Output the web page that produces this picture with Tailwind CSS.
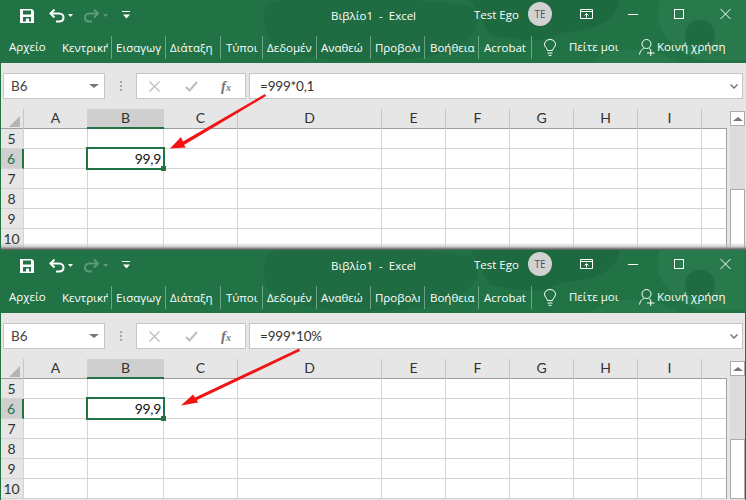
<!DOCTYPE html>
<html><head><meta charset="utf-8"><script src="https://cdn.jsdelivr.net/npm/@tailwindcss/browser@4"></script></head>
<body class="m-0 overflow-hidden bg-[#217346] font-['Open_Sans',sans-serif]">
<div class="relative w-[746px] h-[500px] overflow-hidden">

<!-- PANEL 1 -->
<section class="relative h-[250px] bg-[#e6e6e6] border-l border-[#217346] overflow-hidden">
  <header class="relative h-[63px] -ml-px bg-[#217346] text-white overflow-hidden">
    <svg class="absolute left-0 top-0" width="746" height="63" fill="none"><path d="M268 3C300 -6 400 -4 470 6C490 22 470 48 430 56C370 66 290 62 270 40C262 28 262 12 268 3Z" fill="#1f6c42"/><path d="M470 0H620C615 25 590 30 560 33C540 45 520 40 490 35Z" fill="#1e6a40"/><path d="M660 0H746V60H700C670 50 650 25 660 0Z" fill="#287a4d"/><circle cx="700" cy="35" r="15" fill="#1f6c42"/><path d="M590 63C610 45 650 45 680 63Z" fill="#27784b"/></svg>
    <div class="relative flex items-center h-[31px]">
      <svg class="ml-[20px] w-[14px] h-[14px]" viewBox="0 0 14 14"><path fill="#fff" fill-rule="evenodd" d="M0 0H12L14 2V14H0ZM3 1.500V5.500H11V1.500ZM3 8V12.500H11V8ZM6 9.500H9V12.500H6Z"/></svg>
      <svg class="ml-[15px] w-[16px] h-[14px]" viewBox="0 0 16 14" fill="none" stroke="#fff" stroke-width="2"><path d="M1.500 4.500H10C13 4.500 14.500 6.500 14.500 8.500C14.500 11 12.500 12.500 10 12.500H7"/><path d="M5.500 .5L1.500 4.500L5.500 8.500"/></svg>
      <svg class="ml-[3px] w-[5px] h-[3px]" viewBox="0 0 5 3"><path d="M0 0H5L2.500 3Z" fill="#fff"/></svg>
      <svg class="ml-[11px] w-[15px] h-[14px]" viewBox="0 0 15 14" fill="none" stroke="#5d9a78" stroke-width="2"><path d="M14 4.500H5.500C2.500 4.500 1 6.500 1 8.500C1 11 3 12.500 5.500 12.500H8"/><path d="M10 .5L14 4.500L10 8.500"/></svg>
      <svg class="ml-[4px] w-[5px] h-[3px]" viewBox="0 0 5 3"><path d="M0 0H5L2.500 3Z" fill="#5d9a78"/></svg>
      <svg class="ml-[14px] w-[9px] h-[9px]" viewBox="0 0 9 9" fill="none" stroke="#fff"><path d="M0 .5H8"/><path d="M1 3.500H8L4.500 7.500Z" fill="#fff" stroke="none"/></svg>
      <span class="ml-[200px] w-[84px] text-[11.5px] leading-none whitespace-pre">Βιβλίο1  -  Excel</span>
      <span class="ml-[59px] w-[44px] self-start mt-[9px] text-[11.5px] leading-none whitespace-nowrap">Test Ego</span>
      <span class="ml-[10px] self-start mt-[2px] w-[24px] h-[24px] rounded-full bg-[#d2d2d2] text-[#44546a] text-[10px] flex items-center justify-center">TE</span>
      <svg class="ml-[28px] self-start mt-[9px] w-[13px] h-[10px]" viewBox="0 0 13 10" fill="none" stroke="#fff"><path d="M.5 .5H12.500V9.500H.5ZM.5 2.500H12.500"/><path d="M6.500 8.500V5M4.500 6.500L6.500 4.500L8.500 6.500"/></svg>
      <span class="ml-[35px] self-start mt-[14px] w-[10px] h-px bg-white"></span>
      <span class="ml-[36px] self-start mt-[9px] w-[10px] h-[10px] border border-white"></span>
      <svg class="ml-[36px] self-start mt-[9px] w-[11px] h-[10px]" viewBox="0 0 11 10" stroke="#fff" stroke-width="1"><path d="M.5 0L10.500 10M10.500 0L.5 10"/></svg>
    </div>
    <nav class="relative flex items-center h-[32px] text-[11.5px] whitespace-nowrap">
      <span class="w-[62px] pl-[9px]">Αρχείο</span>
      <span class="w-[50px] h-[23px] leading-[23px] pr-[3px] border-r border-white/35"><span class="block overflow-hidden">Κεντρική</span></span>
      <span class="w-[54px] h-[23px] leading-[23px] pl-[4px] border-r border-white/35">Εισαγωγ</span>
      <span class="w-[55px] h-[23px] leading-[23px] pl-[4px] border-r border-white/35">Διάταξη</span>
      <span class="w-[42px] h-[23px] leading-[23px] pl-[5px] border-r border-white/35">Τύποι</span>
      <span class="w-[54px] h-[23px] leading-[23px] pl-[4px] border-r border-white/35">Δεδομέν</span>
      <span class="w-[54px] h-[23px] leading-[23px] pl-[4px] border-r border-white/35">Αναθεώ</span>
      <span class="w-[54px] h-[23px] leading-[23px] pl-[4px] pr-[4px] border-r border-white/35"><span class="block overflow-hidden">Προβολή</span></span>
      <span class="w-[54px] h-[23px] leading-[23px] pl-[5px] border-r border-white/35">Βοήθεια</span>
      <span class="w-[53px] h-[23px] leading-[23px] pl-[5px] border-r border-white/35">Acrobat</span>
      <svg class="ml-[12px] w-[12px] h-[17px]" viewBox="0 0 12 17" fill="none" stroke="#fff"><path d="M3.500 11.500C3 9 .5 8 .5 5.200C.5 2.500 3 .5 6 .5C9 .5 11.500 2.500 11.500 5.200C11.500 8 9 9 8.500 11.500ZM3.500 14H8.500M4.500 16.300H7.500"/></svg>
      <span class="ml-[13px] w-[49px]">Πείτε μοι</span>
      <svg class="ml-[21px] w-[16px] h-[17px]" viewBox="0 0 16 17" fill="none" stroke="#fff"><circle cx="7.500" cy="5" r="4.500"/><path d="M.5 15.500C1 12 3 10 5 9.500M10 9.500L11.500 10.500M8 14H15.500M11.750 10.500V17"/></svg>
      <span class="ml-[2px]">Κοινή χρήση</span>
    </nav>
  </header>

  <div class="flex h-[46px] pt-[10px] items-start text-[#444]">
    <div class="ml-[2px] w-[102px] h-[26px] bg-white border border-[#c6c6c6] flex items-center justify-between pl-[7px] pr-[5px] font-['Lato',sans-serif] text-[13.5px]"><span>B6</span><i class="w-0 h-0 border-x-[5px] border-t-[4px] border-x-transparent border-t-[#777]"></i></div>
    <div class="w-[31px] h-[26px] flex flex-col items-center justify-center gap-[2px]"><b class="w-[2px] h-[2px] bg-[#a8a8a8]"></b><b class="w-[2px] h-[2px] bg-[#a8a8a8]"></b><b class="w-[2px] h-[2px] bg-[#a8a8a8]"></b></div>
    <div class="w-[110px] h-[26px] bg-white border border-[#c6c6c6] flex items-center">
      <svg class="ml-[12px] w-[11px] h-[11px]" viewBox="0 0 11 11" stroke="#bdbdbd" stroke-width="1.300"><path d="M.5 .5L10.500 10.500M10.500 .5L.5 10.500"/></svg>
      <svg class="ml-[25px] w-[13px] h-[11px]" viewBox="0 0 13 11" fill="none" stroke="#bdbdbd" stroke-width="2"><path d="M1 6L4.500 9.500L12 1"/></svg>
      <span class="ml-[23px] font-['Liberation_Serif',serif] italic font-bold text-[15px] leading-none text-[#777]">f<span class="text-[10px]">x</span></span>
    </div>
    <div class="ml-[3px] w-[494px] h-[26px] bg-white border border-[#c6c6c6] flex items-center justify-between pl-[10px] pr-[4px] font-['Lato',sans-serif] text-[13.5px] tracking-[-0.2px] text-[#333]"><span>=999*0,1</span><svg class="w-[8px] h-[5px]" viewBox="0 0 8 5" fill="none" stroke="#777" stroke-width="1.500"><path d="M.5 .5L4 4L7.500 .5"/></svg></div>
  </div>

  <div class="flex -ml-px">
    <div class="w-[727px] font-['Lato',sans-serif] text-[14px] text-[#222]">
      <div class="grid grid-cols-[24px_64px_76px_74px_144px_64px_64px_64px_64px_64px_25px] h-[20px] text-center leading-[18px] text-[#333] border-b border-[#9f9f9f]">
        <div class="border-r border-[#c6c6c6] relative"><i class="absolute right-[3px] bottom-[2px] w-0 h-0 border-l-[11px] border-b-[11px] border-l-transparent border-b-[#b4b4b4]"></i></div>
        <div class="border-r border-[#c6c6c6]">A</div>
        <div class="-ml-px bg-[#cfcfcf] border-b-2 border-[#217346] h-[20px]">B</div>
        <div class="border-r border-[#c6c6c6]">C</div>
        <div class="border-r border-[#c6c6c6]">D</div>
        <div class="border-r border-[#c6c6c6]">E</div>
        <div class="border-r border-[#c6c6c6]">F</div>
        <div class="border-r border-[#c6c6c6]">G</div>
        <div class="border-r border-[#c6c6c6]">H</div>
        <div class="border-r border-[#c6c6c6]">I</div>
        <div></div>
      </div>
      <div class="border-r border-[#9f9f9f] bg-white">
        <div class="grid grid-cols-[24px_64px_76px_74px_144px_64px_64px_64px_64px_64px_24px] h-[20px] leading-[19px] *:border-r *:border-b *:border-[#d4d4d4]"><div class="bg-[#e6e6e6] text-center text-[#333]">5</div><div></div><div></div><div></div><div></div><div></div><div></div><div></div><div></div><div></div><div class="border-r-0!"></div></div>
        <div class="grid grid-cols-[24px_64px_76px_74px_144px_64px_64px_64px_64px_64px_24px] h-[20px] leading-[19px] *:border-r *:border-b *:border-[#d4d4d4]"><div class="bg-[#cfcfcf] text-center text-[#217346] border-r-2! border-r-[#217346]!">6</div><div></div><div class="relative"><div class="absolute left-[-2px] top-[-2px] w-[79px] h-[23px] border-2 border-[#217346] text-right pr-[2px] leading-[20px] tracking-[-0.3px] text-[#111] z-10">99,9<i class="absolute right-[-3px] bottom-[-3px] w-[5px] h-[5px] bg-[#217346]"></i></div></div><div></div><div></div><div></div><div></div><div></div><div></div><div></div><div class="border-r-0!"></div></div>
        <div class="grid grid-cols-[24px_64px_76px_74px_144px_64px_64px_64px_64px_64px_24px] h-[20px] leading-[19px] *:border-r *:border-b *:border-[#d4d4d4]"><div class="bg-[#e6e6e6] text-center text-[#333]">7</div><div></div><div></div><div></div><div></div><div></div><div></div><div></div><div></div><div></div><div class="border-r-0!"></div></div>
        <div class="grid grid-cols-[24px_64px_76px_74px_144px_64px_64px_64px_64px_64px_24px] h-[20px] leading-[19px] *:border-r *:border-b *:border-[#d4d4d4]"><div class="bg-[#e6e6e6] text-center text-[#333]">8</div><div></div><div></div><div></div><div></div><div></div><div></div><div></div><div></div><div></div><div class="border-r-0!"></div></div>
        <div class="grid grid-cols-[24px_64px_76px_74px_144px_64px_64px_64px_64px_64px_24px] h-[20px] leading-[19px] *:border-r *:border-b *:border-[#d4d4d4]"><div class="bg-[#e6e6e6] text-center text-[#333]">9</div><div></div><div></div><div></div><div></div><div></div><div></div><div></div><div></div><div></div><div class="border-r-0!"></div></div>
        <div class="grid grid-cols-[24px_64px_76px_74px_144px_64px_64px_64px_64px_64px_24px] h-[20px] leading-[19px] *:border-r *:border-b *:border-[#d4d4d4]"><div class="bg-[#e6e6e6] text-center text-[#333]">10</div><div></div><div></div><div></div><div></div><div></div><div></div><div></div><div></div><div></div><div class="border-r-0!"></div></div>
      </div>
    </div>
    <div class="ml-[3px] w-[15px] bg-[#dcdcdc] h-[138px] mt-[2px] flex flex-col justify-between">
      <div class="h-[15px] bg-white border border-[#ababab] flex items-center justify-center"><i class="w-0 h-0 border-x-[5px] border-b-[4px] border-x-transparent border-b-[#777]"></i></div>
      <div class="h-[60px] bg-white border border-[#ababab]"></div>
    </div>
  </div>
  <div class="absolute left-0 right-0 bottom-0 h-[7px] bg-gradient-to-b from-transparent via-[#bdbdbd]/70 to-[#555]"></div>
</section>

<!-- PANEL 2 -->
<section class="relative h-[250px] bg-[#e6e6e6] border-x border-[#217346] overflow-hidden">
  <header class="relative h-[63px] -ml-px -mr-px bg-[#217346] text-white overflow-hidden">
    <svg class="absolute left-0 top-0" width="746" height="63" fill="none"><path d="M268 3C300 -6 400 -4 470 6C490 22 470 48 430 56C370 66 290 62 270 40C262 28 262 12 268 3Z" fill="#1f6c42"/><path d="M470 0H620C615 25 590 30 560 33C540 45 520 40 490 35Z" fill="#1e6a40"/><path d="M660 0H746V60H700C670 50 650 25 660 0Z" fill="#287a4d"/><circle cx="700" cy="35" r="15" fill="#1f6c42"/><path d="M590 63C610 45 650 45 680 63Z" fill="#27784b"/></svg>
    <div class="relative flex items-center h-[31px]">
      <svg class="ml-[20px] w-[14px] h-[14px]" viewBox="0 0 14 14"><path fill="#fff" fill-rule="evenodd" d="M0 0H12L14 2V14H0ZM3 1.500V5.500H11V1.500ZM3 8V12.500H11V8ZM6 9.500H9V12.500H6Z"/></svg>
      <svg class="ml-[15px] w-[16px] h-[14px]" viewBox="0 0 16 14" fill="none" stroke="#fff" stroke-width="2"><path d="M1.500 4.500H10C13 4.500 14.500 6.500 14.500 8.500C14.500 11 12.500 12.500 10 12.500H7"/><path d="M5.500 .5L1.500 4.500L5.500 8.500"/></svg>
      <svg class="ml-[3px] w-[5px] h-[3px]" viewBox="0 0 5 3"><path d="M0 0H5L2.500 3Z" fill="#fff"/></svg>
      <svg class="ml-[11px] w-[15px] h-[14px]" viewBox="0 0 15 14" fill="none" stroke="#5d9a78" stroke-width="2"><path d="M14 4.500H5.500C2.500 4.500 1 6.500 1 8.500C1 11 3 12.500 5.500 12.500H8"/><path d="M10 .5L14 4.500L10 8.500"/></svg>
      <svg class="ml-[4px] w-[5px] h-[3px]" viewBox="0 0 5 3"><path d="M0 0H5L2.500 3Z" fill="#5d9a78"/></svg>
      <svg class="ml-[14px] w-[9px] h-[9px]" viewBox="0 0 9 9" fill="none" stroke="#fff"><path d="M0 .5H8"/><path d="M1 3.500H8L4.500 7.500Z" fill="#fff" stroke="none"/></svg>
      <span class="ml-[200px] w-[84px] text-[11.5px] leading-none whitespace-pre">Βιβλίο1  -  Excel</span>
      <span class="ml-[59px] w-[44px] self-start mt-[9px] text-[11.5px] leading-none whitespace-nowrap">Test Ego</span>
      <span class="ml-[10px] self-start mt-[2px] w-[24px] h-[24px] rounded-full bg-[#d2d2d2] text-[#44546a] text-[10px] flex items-center justify-center">TE</span>
      <svg class="ml-[28px] self-start mt-[9px] w-[13px] h-[10px]" viewBox="0 0 13 10" fill="none" stroke="#fff"><path d="M.5 .5H12.500V9.500H.5ZM.5 2.500H12.500"/><path d="M6.500 8.500V5M4.500 6.500L6.500 4.500L8.500 6.500"/></svg>
      <span class="ml-[35px] self-start mt-[14px] w-[10px] h-px bg-white"></span>
      <span class="ml-[36px] self-start mt-[9px] w-[10px] h-[10px] border border-white"></span>
      <svg class="ml-[36px] self-start mt-[9px] w-[11px] h-[10px]" viewBox="0 0 11 10" stroke="#fff" stroke-width="1"><path d="M.5 0L10.500 10M10.500 0L.5 10"/></svg>
    </div>
    <nav class="relative flex items-center h-[32px] text-[11.5px] whitespace-nowrap">
      <span class="w-[62px] pl-[9px]">Αρχείο</span>
      <span class="w-[50px] h-[23px] leading-[23px] pr-[3px] border-r border-white/35"><span class="block overflow-hidden">Κεντρική</span></span>
      <span class="w-[54px] h-[23px] leading-[23px] pl-[4px] border-r border-white/35">Εισαγωγ</span>
      <span class="w-[55px] h-[23px] leading-[23px] pl-[4px] border-r border-white/35">Διάταξη</span>
      <span class="w-[42px] h-[23px] leading-[23px] pl-[5px] border-r border-white/35">Τύποι</span>
      <span class="w-[54px] h-[23px] leading-[23px] pl-[4px] border-r border-white/35">Δεδομέν</span>
      <span class="w-[54px] h-[23px] leading-[23px] pl-[4px] border-r border-white/35">Αναθεώ</span>
      <span class="w-[54px] h-[23px] leading-[23px] pl-[4px] pr-[4px] border-r border-white/35"><span class="block overflow-hidden">Προβολή</span></span>
      <span class="w-[54px] h-[23px] leading-[23px] pl-[5px] border-r border-white/35">Βοήθεια</span>
      <span class="w-[53px] h-[23px] leading-[23px] pl-[5px] border-r border-white/35">Acrobat</span>
      <svg class="ml-[12px] w-[12px] h-[17px]" viewBox="0 0 12 17" fill="none" stroke="#fff"><path d="M3.500 11.500C3 9 .5 8 .5 5.200C.5 2.500 3 .5 6 .5C9 .5 11.500 2.500 11.500 5.200C11.500 8 9 9 8.500 11.500ZM3.500 14H8.500M4.500 16.300H7.500"/></svg>
      <span class="ml-[13px] w-[49px]">Πείτε μοι</span>
      <svg class="ml-[21px] w-[16px] h-[17px]" viewBox="0 0 16 17" fill="none" stroke="#fff"><circle cx="7.500" cy="5" r="4.500"/><path d="M.5 15.500C1 12 3 10 5 9.500M10 9.500L11.500 10.500M8 14H15.500M11.750 10.500V17"/></svg>
      <span class="ml-[2px]">Κοινή χρήση</span>
    </nav>
  </header>

  <div class="flex h-[46px] pt-[10px] items-start text-[#444]">
    <div class="ml-[2px] w-[102px] h-[26px] bg-white border border-[#c6c6c6] flex items-center justify-between pl-[7px] pr-[5px] font-['Lato',sans-serif] text-[13.5px]"><span>B6</span><i class="w-0 h-0 border-x-[5px] border-t-[4px] border-x-transparent border-t-[#777]"></i></div>
    <div class="w-[31px] h-[26px] flex flex-col items-center justify-center gap-[2px]"><b class="w-[2px] h-[2px] bg-[#a8a8a8]"></b><b class="w-[2px] h-[2px] bg-[#a8a8a8]"></b><b class="w-[2px] h-[2px] bg-[#a8a8a8]"></b></div>
    <div class="w-[110px] h-[26px] bg-white border border-[#c6c6c6] flex items-center">
      <svg class="ml-[12px] w-[11px] h-[11px]" viewBox="0 0 11 11" stroke="#bdbdbd" stroke-width="1.300"><path d="M.5 .5L10.500 10.500M10.500 .5L.5 10.500"/></svg>
      <svg class="ml-[25px] w-[13px] h-[11px]" viewBox="0 0 13 11" fill="none" stroke="#bdbdbd" stroke-width="2"><path d="M1 6L4.500 9.500L12 1"/></svg>
      <span class="ml-[23px] font-['Liberation_Serif',serif] italic font-bold text-[15px] leading-none text-[#777]">f<span class="text-[10px]">x</span></span>
    </div>
    <div class="ml-[3px] w-[494px] h-[26px] bg-white border border-[#c6c6c6] flex items-center justify-between pl-[10px] pr-[4px] font-['Lato',sans-serif] text-[13.5px] tracking-[-0.2px] text-[#333]"><span>=999*10%</span><svg class="w-[8px] h-[5px]" viewBox="0 0 8 5" fill="none" stroke="#777" stroke-width="1.500"><path d="M.5 .5L4 4L7.500 .5"/></svg></div>
  </div>

  <div class="flex -ml-px">
    <div class="w-[727px] font-['Lato',sans-serif] text-[14px] text-[#222]">
      <div class="grid grid-cols-[24px_64px_76px_74px_144px_64px_64px_64px_64px_64px_25px] h-[20px] text-center leading-[18px] text-[#333] border-b border-[#9f9f9f]">
        <div class="border-r border-[#c6c6c6] relative"><i class="absolute right-[3px] bottom-[2px] w-0 h-0 border-l-[11px] border-b-[11px] border-l-transparent border-b-[#b4b4b4]"></i></div>
        <div class="border-r border-[#c6c6c6]">A</div>
        <div class="-ml-px bg-[#cfcfcf] border-b-2 border-[#217346] h-[20px]">B</div>
        <div class="border-r border-[#c6c6c6]">C</div>
        <div class="border-r border-[#c6c6c6]">D</div>
        <div class="border-r border-[#c6c6c6]">E</div>
        <div class="border-r border-[#c6c6c6]">F</div>
        <div class="border-r border-[#c6c6c6]">G</div>
        <div class="border-r border-[#c6c6c6]">H</div>
        <div class="border-r border-[#c6c6c6]">I</div>
        <div></div>
      </div>
      <div class="border-r border-[#9f9f9f] bg-white">
        <div class="grid grid-cols-[24px_64px_76px_74px_144px_64px_64px_64px_64px_64px_24px] h-[20px] leading-[19px] *:border-r *:border-b *:border-[#d4d4d4]"><div class="bg-[#e6e6e6] text-center text-[#333]">5</div><div></div><div></div><div></div><div></div><div></div><div></div><div></div><div></div><div></div><div class="border-r-0!"></div></div>
        <div class="grid grid-cols-[24px_64px_76px_74px_144px_64px_64px_64px_64px_64px_24px] h-[20px] leading-[19px] *:border-r *:border-b *:border-[#d4d4d4]"><div class="bg-[#cfcfcf] text-center text-[#217346] border-r-2! border-r-[#217346]!">6</div><div></div><div class="relative"><div class="absolute left-[-2px] top-[-2px] w-[79px] h-[23px] border-2 border-[#217346] text-right pr-[2px] leading-[20px] tracking-[-0.3px] text-[#111] z-10">99,9<i class="absolute right-[-3px] bottom-[-3px] w-[5px] h-[5px] bg-[#217346]"></i></div></div><div></div><div></div><div></div><div></div><div></div><div></div><div></div><div class="border-r-0!"></div></div>
        <div class="grid grid-cols-[24px_64px_76px_74px_144px_64px_64px_64px_64px_64px_24px] h-[20px] leading-[19px] *:border-r *:border-b *:border-[#d4d4d4]"><div class="bg-[#e6e6e6] text-center text-[#333]">7</div><div></div><div></div><div></div><div></div><div></div><div></div><div></div><div></div><div></div><div class="border-r-0!"></div></div>
        <div class="grid grid-cols-[24px_64px_76px_74px_144px_64px_64px_64px_64px_64px_24px] h-[20px] leading-[19px] *:border-r *:border-b *:border-[#d4d4d4]"><div class="bg-[#e6e6e6] text-center text-[#333]">8</div><div></div><div></div><div></div><div></div><div></div><div></div><div></div><div></div><div></div><div class="border-r-0!"></div></div>
        <div class="grid grid-cols-[24px_64px_76px_74px_144px_64px_64px_64px_64px_64px_24px] h-[20px] leading-[19px] *:border-r *:border-b *:border-[#d4d4d4]"><div class="bg-[#e6e6e6] text-center text-[#333]">9</div><div></div><div></div><div></div><div></div><div></div><div></div><div></div><div></div><div></div><div class="border-r-0!"></div></div>
        <div class="grid grid-cols-[24px_64px_76px_74px_144px_64px_64px_64px_64px_64px_24px] h-[20px] leading-[19px] *:border-r *:border-b *:border-[#d4d4d4]"><div class="bg-[#e6e6e6] text-center text-[#333]">10</div><div></div><div></div><div></div><div></div><div></div><div></div><div></div><div></div><div></div><div class="border-r-0!"></div></div>
      </div>
    </div>
    <div class="ml-[3px] w-[15px] bg-[#dcdcdc] h-[138px] mt-[2px] flex flex-col justify-between">
      <div class="h-[15px] bg-white border border-[#ababab] flex items-center justify-center"><i class="w-0 h-0 border-x-[5px] border-b-[4px] border-x-transparent border-b-[#777]"></i></div>
      <div class="h-[60px] bg-white border border-[#ababab]"></div>
    </div>
  </div>
</section>

<!-- arrows laid over the screenshot -->
<svg class="absolute left-0 top-0 z-20 pointer-events-none" width="746" height="500" fill="#f01414">
  <path d="M265 94L266 96L184 145L186 147.500L170 148.500L181 137L183 141.500Z"/>
  <path d="M299 348.500L300 351L197 400L198 402.500L181 405.500L193 394.500L195 397.500Z"/>
</svg>
</div>
</body></html>
